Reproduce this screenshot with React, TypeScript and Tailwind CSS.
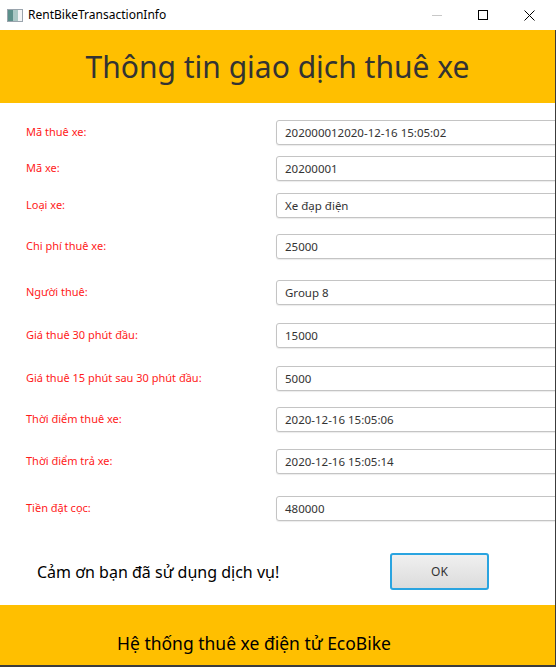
const FONT = "font-['Segoe_UI','Noto_Sans','Open_Sans',sans-serif]";

const rows: { label: string; value: string; mt: string }[] = [
  { label: 'Mã thuê xe:', value: '202000012020-12-16 15:05:02', mt: 'mt-[17px]' },
  { label: 'Mã xe:', value: '20200001', mt: 'mt-[11px]' },
  { label: 'Loại xe:', value: 'Xe đạp điện', mt: 'mt-[12px]' },
  { label: 'Chi phí thuê xe:', value: '25000', mt: 'mt-[16px]' },
  { label: 'Người thuê:', value: 'Group 8', mt: 'mt-[21px]' },
  { label: 'Giá thuê 30 phút đầu:', value: '15000', mt: 'mt-[18px]' },
  { label: 'Giá thuê 15 phút sau 30 phút đầu:', value: '5000', mt: 'mt-[18px]' },
  { label: 'Thời điểm thuê xe:', value: '2020-12-16 15:05:06', mt: 'mt-[16px]' },
  { label: 'Thời điểm trả xe:', value: '2020-12-16 15:05:14', mt: 'mt-[17px]' },
  { label: 'Tiền đặt cọc:', value: '480000', mt: 'mt-[22px]' },
];

function TitleBar() {
  return (
    <div className="flex h-[30px] items-center bg-white">
      <div className="ml-[7px] flex h-[13px] w-[16px] overflow-hidden border border-[#9aa4ad] bg-[#e8ecef]">
        <div className="w-[5px] bg-[#5b8f8a]" />
        <div className="w-[5px] bg-[#a9c7c4]" />
        <div className="flex-1 bg-[#f2f4f5]" />
      </div>
      <span className="ml-[5px] text-[12px] text-black">RentBikeTransactionInfo</span>
      <div className="ml-auto flex h-full items-center">
        <div className="flex w-[46px] justify-center">
          <div className="h-px w-[10px] bg-[#c8c8c8]" />
        </div>
        <div className="flex w-[46px] justify-center">
          <div className="h-[10px] w-[10px] border border-black" />
        </div>
        <div className="flex w-[46px] justify-center">
          <svg width="11" height="11" viewBox="0 0 11 11">
            <path d="M0.5 0.5 L10.5 10.5 M10.5 0.5 L0.5 10.5" stroke="black" strokeWidth="1" />
          </svg>
        </div>
        <div className="w-[4px]" />
      </div>
    </div>
  );
}

function Field({ label, value, mt }: { label: string; value: string; mt: string }) {
  return (
    <div className={`flex items-center ${mt}`}>
      <span className="ml-[26px] w-[250px] shrink-0 text-[11px] text-[#ff1a1a]">{label}</span>
      <div className="flex h-[25px] w-[300px] shrink-0 items-center rounded-[3px] border border-[#c4c4c4] bg-white pl-[8px] text-[11.5px] text-[#333] shadow-[0_1px_1px_rgba(0,0,0,0.08)]">
        {value}
      </div>
    </div>
  );
}

export default function App() {
  return (
    <div className={`h-[667px] w-[556px] overflow-hidden bg-white ${FONT}`}>
      <TitleBar />
      <div className="flex h-[637px] flex-col overflow-hidden border-r border-b-2 border-[#3c3c3c]">
        <div className="flex h-[73px] shrink-0 items-center justify-center bg-[#ffbf00]">
          <h1 className="pb-[1px] text-[30px] text-[#333333]">Thông tin giao dịch thuê xe</h1>
        </div>

        <div className="flex flex-col">
          {rows.map((r) => (
            <Field key={r.label} {...r} />
          ))}
        </div>

        <div className="mt-[32px] flex items-center">
          <span className="ml-[37px] text-[16px] text-black">Cảm ơn bạn đã sử dụng dịch vụ!</span>
          <button className="ml-auto mr-[66px] flex h-[37px] w-[99px] items-center justify-center rounded-[3px] border-2 border-[#2aa4e0] bg-gradient-to-b from-[#f0f0f0] to-[#dcdcdc] text-[12px] text-[#333]">
            OK
          </button>
        </div>

        <div className="mt-[15px] flex flex-1 items-center bg-[#ffbf00]">
          <span className="ml-[117px] pt-[16px] text-[17.5px] text-black">Hệ thống thuê xe điện tử EcoBike</span>
        </div>
      </div>
    </div>
  );
}
